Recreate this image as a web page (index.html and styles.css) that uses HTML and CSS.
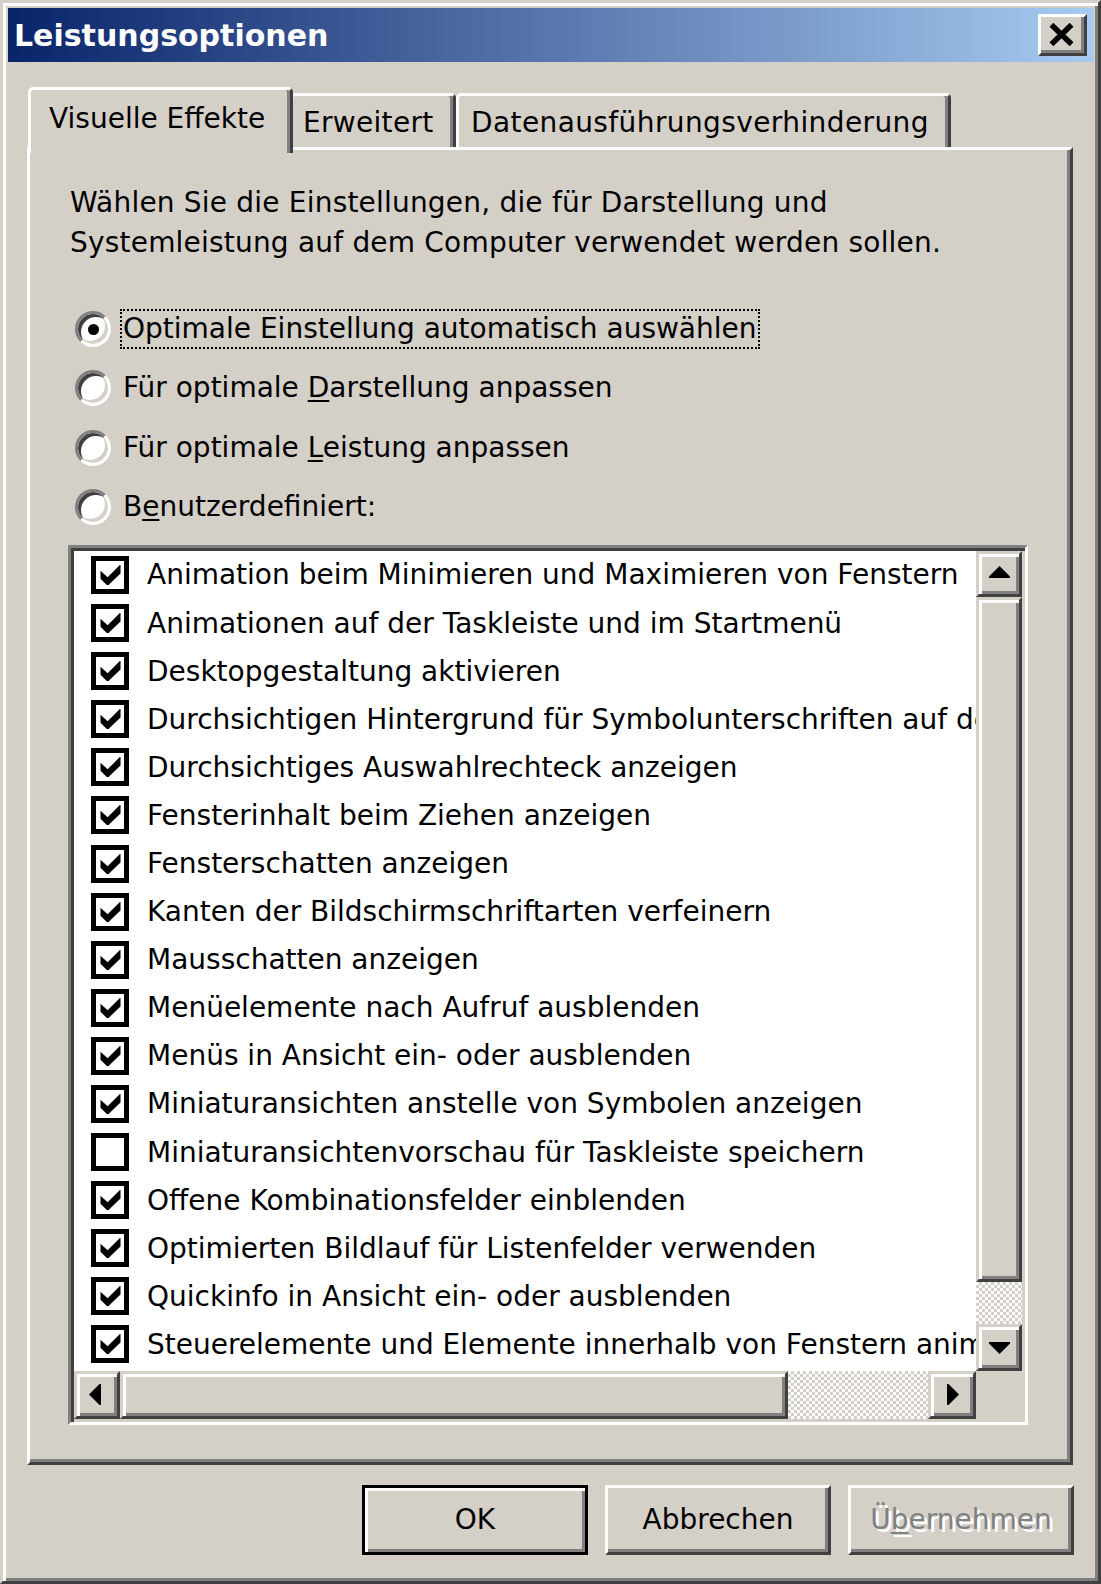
FILE: index.html
```html
<!DOCTYPE html>
<html lang="de">
<head>
<meta charset="utf-8">
<title>Leistungsoptionen</title>
<link rel="stylesheet" href="styles.css">
</head>
<body>
<div class="window">
  <div class="titlebar">
    <span class="title">Leistungsoptionen</span>
    <div class="closebtn">
      <svg width="27" height="23" viewBox="0 0 9 8"><path d="M1 0.6 L8 7.4 M8 0.6 L1 7.4" stroke="#000" stroke-width="1.9" fill="none"/></svg>
    </div>
  </div>
  <div class="body">
    <div class="tabs">
      <div class="tab sel">Visuelle Effekte</div>
      <div class="tab t2">Erweitert</div>
      <div class="tab t3">Datenausführungsverhinderung</div>
    </div>
    <div class="panel">
      <p class="desc">Wählen Sie die Einstellungen, die für Darstellung und<br>Systemleistung auf dem Computer verwendet werden sollen.</p>
      <div class="radios">
        <div class="radio-row"><span class="radio checked"><span class="dot"></span></span><span class="rlabel focus">Optimale Einstellung automatisch auswählen</span></div>
        <div class="radio-row"><span class="radio"></span><span class="rlabel">Für optimale <u>D</u>arstellung anpassen</span></div>
        <div class="radio-row"><span class="radio"></span><span class="rlabel">Für optimale <u>L</u>eistung anpassen</span></div>
        <div class="radio-row"><span class="radio"></span><span class="rlabel">B<u>e</u>nutzerdefiniert:</span></div>
      </div>
      <div class="listbox">
        <div class="lb-grid">
          <div class="items">
            <div class="item"><span class="cb on"></span><span class="itxt">Animation beim Minimieren und Maximieren von Fenstern</span></div>
            <div class="item"><span class="cb on"></span><span class="itxt">Animationen auf der Taskleiste und im Startmenü</span></div>
            <div class="item"><span class="cb on"></span><span class="itxt">Desktopgestaltung aktivieren</span></div>
            <div class="item"><span class="cb on"></span><span class="itxt">Durchsichtigen Hintergrund für Symbolunterschriften auf dem Desktop</span></div>
            <div class="item"><span class="cb on"></span><span class="itxt">Durchsichtiges Auswahlrechteck anzeigen</span></div>
            <div class="item"><span class="cb on"></span><span class="itxt">Fensterinhalt beim Ziehen anzeigen</span></div>
            <div class="item"><span class="cb on"></span><span class="itxt">Fensterschatten anzeigen</span></div>
            <div class="item"><span class="cb on"></span><span class="itxt">Kanten der Bildschirmschriftarten verfeinern</span></div>
            <div class="item"><span class="cb on"></span><span class="itxt">Mausschatten anzeigen</span></div>
            <div class="item"><span class="cb on"></span><span class="itxt">Menüelemente nach Aufruf ausblenden</span></div>
            <div class="item"><span class="cb on"></span><span class="itxt">Menüs in Ansicht ein- oder ausblenden</span></div>
            <div class="item"><span class="cb on"></span><span class="itxt">Miniaturansichten anstelle von Symbolen anzeigen</span></div>
            <div class="item"><span class="cb"></span><span class="itxt">Miniaturansichtenvorschau für Taskleiste speichern</span></div>
            <div class="item"><span class="cb on"></span><span class="itxt">Offene Kombinationsfelder einblenden</span></div>
            <div class="item"><span class="cb on"></span><span class="itxt">Optimierten Bildlauf für Listenfelder verwenden</span></div>
            <div class="item"><span class="cb on"></span><span class="itxt">Quickinfo in Ansicht ein- oder ausblenden</span></div>
            <div class="item"><span class="cb on"></span><span class="itxt">Steuerelemente und Elemente innerhalb von Fenstern animieren</span></div>
          </div>
          <div class="vscroll">
            <div class="sbtn up"><svg width="21" height="12" viewBox="0 0 7 4"><polygon points="3.5,0 7,3.5 7,4 0,4 0,3.5" fill="#000"/></svg></div>
            <div class="vthumb"></div>
            <div class="track"></div>
            <div class="sbtn down"><svg width="21" height="12" viewBox="0 0 7 4"><polygon points="0,0 7,0 7,0.5 3.5,4 0,0.5" fill="#000"/></svg></div>
          </div>
          <div class="hscroll">
            <div class="sbtn left"><svg width="12" height="21" viewBox="0 0 4 7"><polygon points="0,3.5 3.5,0 4,0 4,7 3.5,7" fill="#000"/></svg></div>
            <div class="hthumb"></div>
            <div class="track"></div>
            <div class="sbtn right"><svg width="12" height="21" viewBox="0 0 4 7"><polygon points="0,0 0.5,0 4,3.5 0.5,7 0,7" fill="#000"/></svg></div>
          </div>
          <div class="corner"></div>
        </div>
      </div>
    </div>
    <div class="buttons">
      <div class="btn default">OK</div>
      <div class="btn">Abbrechen</div>
      <div class="btn disabled">Ü<u>b</u>ernehmen</div>
    </div>
  </div>
</div>
</body>
</html>
```
FILE: styles.css
```css
html, body {
  margin: 0;
  padding: 0;
}
body {
  width: 1101px;
  height: 1584px;
  overflow: hidden;
  font-family: "DejaVu Sans", "Liberation Sans", sans-serif;
  font-size: 28px;
  color: #000;
  background: #d4d0c8;
}
.window {
  box-sizing: border-box;
  width: 1101px;
  height: 1584px;
  background: #d4d0c8;
  border: 3px solid;
  border-color: #d4d0c8 #404040 #404040 #d4d0c8;
  box-shadow: inset 3px 3px #fff, inset -3px -3px #808080;
  padding: 5px;
  display: flex;
  flex-direction: column;
}
.titlebar {
  flex: none;
  height: 54px;
  background: linear-gradient(to right, #0a246a, #a6caf0);
  display: flex;
  align-items: center;
  justify-content: space-between;
  padding: 0 6px;
}
.title {
  color: #fff;
  font-weight: bold;
  font-size: 30px;
}
.closebtn {
  box-sizing: border-box;
  width: 49px;
  height: 42px;
  background: #d4d0c8;
  border: 3px solid;
  border-color: #fff #404040 #404040 #fff;
  box-shadow: inset -3px -3px #808080;
  display: flex;
  align-items: center;
  justify-content: center;
  padding: 0 3px 2px 0;
}
.closebtn svg { display: block; }
.body {
  flex: 1;
  display: flex;
  flex-direction: column;
  padding: 25px 20px 0 19px;
}
.tabs {
  display: flex;
  align-items: flex-end;
  height: 66px;
  margin-bottom: -6px;
  margin-left: 1px;
  position: relative;
  z-index: 1;
}
.tab {
  box-sizing: border-box;
  height: 54px;
  margin-bottom: 6px;
  background: #d4d0c8;
  border: 3px solid;
  border-bottom: 0;
  border-color: #fff #404040 transparent #fff;
  box-shadow: inset -3px 0 #808080;
  border-radius: 5px 5px 0 0;
  display: flex;
  align-items: center;
  white-space: nowrap;
}
.tab.sel {
  position: relative;
  z-index: 2;
  width: 265px;
  height: 66px;
  margin-bottom: 0;
  padding: 0 0 6px 18px;
}
.tab.t2 {
  width: 166px;
  margin-left: -3px;
  padding-left: 10px;
  padding-top: 2px;
  letter-spacing: 0.3px;
}
.tab.t3 {
  width: 495px;
  padding-left: 12px;
  padding-top: 2px;
  letter-spacing: 0.4px;
}
.panel {
  flex: none;
  box-sizing: border-box;
  height: 1318px;
  background: #d4d0c8;
  border: 3px solid;
  border-color: #fff #404040 #404040 #fff;
  box-shadow: inset -3px -3px #808080;
  padding: 33px 0 0 40px;
}
.desc {
  margin: 0;
  line-height: 40px;
  white-space: nowrap;
  letter-spacing: 0.2px;
}
.radios {
  margin-top: 46px;
  display: flex;
  flex-direction: column;
  gap: 19.3px;
}
.radio-row {
  display: flex;
  align-items: center;
  height: 40px;
  margin-left: 5px;
}
.radio {
  box-sizing: border-box;
  width: 36px;
  height: 36px;
  flex: none;
  border-radius: 50%;
  border: 3px solid;
  border-color: #808080 #fff #fff #808080;
  background: #fff;
  box-shadow: inset 3px 3px 0 0 #404040, inset -3px -3px 0 0 #d4d0c8;
  display: flex;
  align-items: center;
  justify-content: center;
  margin-right: 9px;
}
.radio .dot {
  width: 11px;
  height: 11px;
  border-radius: 50%;
  background: #000;
}
.rlabel {
  box-sizing: border-box;
  display: block;
  height: 40px;
  line-height: 36px;
  padding: 0 1px;
  border: 2px solid transparent;
  white-space: nowrap;
}
.rlabel.focus {
  border: 2px dotted #000;
}
u {
  text-decoration-thickness: 2px;
  text-underline-offset: 3px;
}
.listbox {
  box-sizing: border-box;
  width: 960px;
  height: 880px;
  margin: 18px 0 0 -2px;
  border: 3px solid;
  border-color: #808080 #fff #fff #808080;
  box-shadow: inset 3px 3px #404040, inset -3px -3px #d4d0c8;
  padding: 3px;
}
.lb-grid {
  display: grid;
  grid-template-columns: 902px 46px;
  grid-template-rows: 820px 48px;
  width: 948px;
  height: 868px;
}
.items {
  background: #fff;
  overflow: hidden;
  padding-top: 0;
}
.item {
  height: 48.1px;
  display: flex;
  align-items: center;
  padding-left: 17px;
  white-space: nowrap;
}
.itxt {
  white-space: nowrap;
}
.cb {
  box-sizing: border-box;
  flex: none;
  width: 38px;
  height: 38px;
  border: 5px solid #000;
  background: #fff;
  margin-right: 18px;
}
.cb.on {
  background: #fff url("data:image/svg+xml,%3Csvg xmlns='http://www.w3.org/2000/svg' viewBox='0 0 7 7'%3E%3Cpolygon points='0,2 2.5,4.3 7,-0.2 7,3 2.5,7.3 0,4.8' fill='%23000'/%3E%3C/svg%3E") center / 21px 20px no-repeat;
}
.sbtn {
  box-sizing: border-box;
  background: #d4d0c8;
  border: 3px solid;
  border-color: #d4d0c8 #404040 #404040 #d4d0c8;
  box-shadow: inset 3px 3px #fff, inset -3px -3px #808080;
  display: flex;
  align-items: center;
  justify-content: center;
}
.sbtn svg { display: block; }
.vscroll {
  display: flex;
  flex-direction: column;
}
.vscroll .up { height: 46px; padding-bottom: 4px; }
.vscroll .down { height: 47px; padding-top: 2px; }
.vthumb {
  box-sizing: border-box;
  height: 685px;
  background: #d4d0c8;
  border: 3px solid;
  border-color: #d4d0c8 #404040 #404040 #d4d0c8;
  box-shadow: inset 3px 3px #fff, inset -3px -3px #808080;
}
.vscroll .track { height: 42px; }
.track {
  background-color: #fff;
  background-image: repeating-conic-gradient(#d4d0c8 0 25%, #fff 0 50%);
  background-size: 6px 6px;
}
.hscroll {
  display: flex;
}
.hscroll .left { width: 46px; padding-right: 4px; }
.hscroll .right { width: 48px; padding-left: 2px; }
.hthumb {
  box-sizing: border-box;
  width: 668px;
  background: #d4d0c8;
  border: 3px solid;
  border-color: #d4d0c8 #404040 #404040 #d4d0c8;
  box-shadow: inset 3px 3px #fff, inset -3px -3px #808080;
}
.hscroll .track { width: 140px; }
.corner {
  background: #d4d0c8;
}
.buttons {
  display: flex;
  justify-content: flex-end;
  gap: 17px;
  margin-top: 20px;
  margin-right: -1px;
}
.btn {
  box-sizing: border-box;
  width: 226px;
  height: 70px;
  background: #d4d0c8;
  border: 3px solid;
  border-color: #fff #404040 #404040 #fff;
  box-shadow: inset -3px -3px #808080;
  display: flex;
  align-items: center;
  justify-content: center;
  padding-bottom: 2px;
}
.btn.default {
  border-color: #000;
  box-shadow: inset 3px 3px #fff, inset -3px -3px #808080;
}
.btn.disabled {
  color: #808080;
  text-shadow: 3px 3px 0 #fff;
}
```
